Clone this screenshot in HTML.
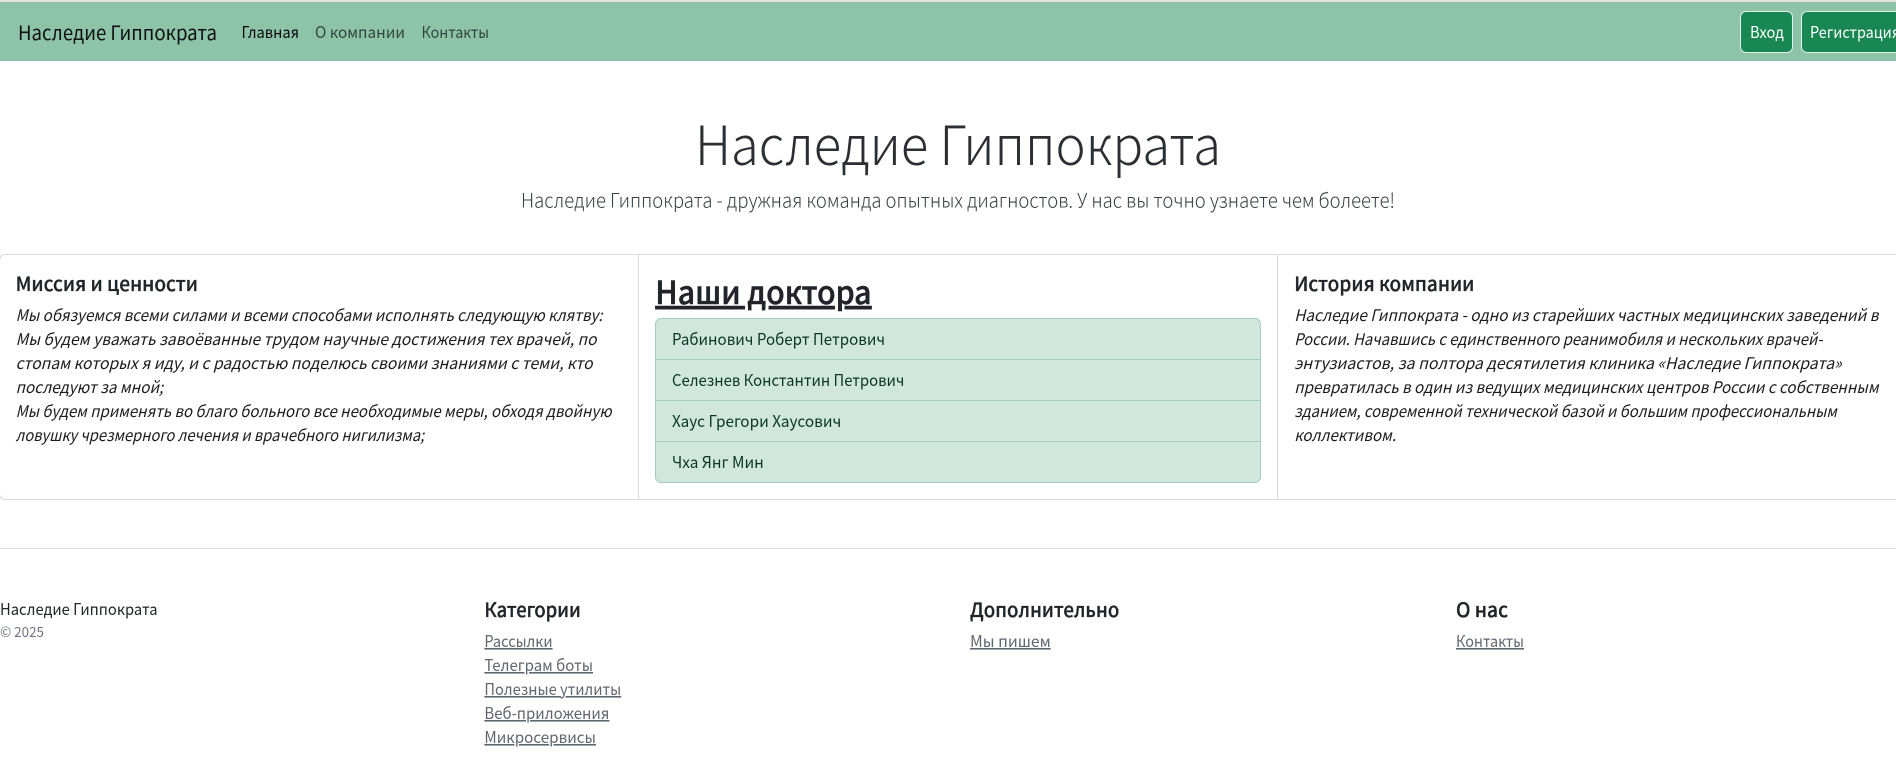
<!DOCTYPE html>
<html lang="ru">
<head>
<meta charset="utf-8">
<title>Наследие Гиппократа</title>
<style>
html,body{margin:0;padding:0;width:1896px;height:767px;overflow:hidden;background:#fff}
.topline{position:absolute;left:0;top:0;width:1896px;height:2px;background:#e2e3e0}
nav{position:absolute;left:0;top:2px;width:1896px;height:59px;background:#8cc3a9}
.btn{position:absolute;top:11px;height:40px;background:#198754;border:1px solid #e4efe9;border-radius:6px;box-sizing:content-box}
.card{position:absolute;left:-1px;top:254px;width:1918px;height:244px;border:1px solid #d9d9d9;border-radius:6px;box-sizing:content-box}
.v{position:absolute;top:255px;width:1px;height:244px;background:#d9d9d9}
.list{position:absolute;left:655px;top:318px;width:604px;height:163px;background:#d1e7dd;border:1px solid #a3cfbb;border-radius:6px}
.sep{position:absolute;left:656px;width:604px;height:1px;background:#a3cfbb}
.hr{position:absolute;left:0;top:548px;width:1896px;height:1px;background:#dfdfe8}
svg{position:absolute;left:0;top:0}
text{font-family:"Noto Sans CJK JP","Liberation Sans",sans-serif;font-size:16px;fill:#212529;white-space:pre}
.i{font-style:italic;fill:#1c1c1c}
.h5{font-size:20px;font-weight:500;stroke:#212529;stroke-width:.3px}
.lnk{fill:#60676e;text-decoration:underline}
.it{fill:#0a3622}
.n{fill:rgba(0,0,0,.65)}
</style>
</head>
<body>
<div class="topline"></div>
<nav></nav>
<div class="btn" style="left:1740px;width:51px"></div>
<div class="btn" style="left:1801px;width:120px"></div>
<div class="card"></div>
<div class="v" style="left:638px"></div>
<div class="v" style="left:1277px"></div>
<div class="list"></div>
<div class="sep" style="top:359px"></div>
<div class="sep" style="top:400px"></div>
<div class="sep" style="top:441px"></div>
<div class="hr"></div>
<svg width="1896" height="767" viewBox="0 0 1896 767" xmlns="http://www.w3.org/2000/svg">
<g>
<text x="18" y="40" style="font-size:20px;fill:#111" textLength="199" lengthAdjust="spacingAndGlyphs">Наследие Гиппократа</text>
<text x="241.5" y="38" style="fill:#0a0a0a" textLength="57.5" lengthAdjust="spacingAndGlyphs">Главная</text>
<text class="n" x="315" y="38" textLength="90" lengthAdjust="spacingAndGlyphs">О компании</text>
<text class="n" x="421.5" y="38" textLength="67.5" lengthAdjust="spacingAndGlyphs">Контакты</text>
<text x="1750" y="38" style="fill:#fff" textLength="34" lengthAdjust="spacingAndGlyphs">Вход</text>
<text x="1810" y="38" style="fill:#fff" textLength="90" lengthAdjust="spacingAndGlyphs">Регистрация</text>

<text x="695" y="165" style="font-size:54px;font-weight:300;fill:#2b2f33" textLength="526" lengthAdjust="spacingAndGlyphs">Наследие Гиппократа</text>
<text x="521" y="207.5" style="font-size:20px;font-weight:300;fill:#3a3f44" textLength="874" lengthAdjust="spacingAndGlyphs">Наследие Гиппократа - дружная команда опытных диагностов. У нас вы точно узнаете чем болеете!</text>

<text class="h5" x="15.6" y="291" textLength="182.4" lengthAdjust="spacingAndGlyphs">Миссия и ценности</text>
<text class="i" x="15.6" y="321" textLength="587" lengthAdjust="spacingAndGlyphs">Мы обязуемся всеми силами и всеми способами исполнять следующую клятву:</text>
<text class="i" x="15.6" y="345" textLength="581" lengthAdjust="spacingAndGlyphs">Мы будем уважать завоёванные трудом научные достижения тех врачей, по</text>
<text class="i" x="15.6" y="369" textLength="577" lengthAdjust="spacingAndGlyphs">стопам которых я иду, и с радостью поделюсь своими знаниями с теми, кто</text>
<text class="i" x="15.6" y="393" textLength="147.7" lengthAdjust="spacingAndGlyphs">последуют за мной;</text>
<text class="i" x="15.6" y="417" textLength="596" lengthAdjust="spacingAndGlyphs">Мы будем применять во благо больного все необходимые меры, обходя двойную</text>
<text class="i" x="15.6" y="441" textLength="408.6" lengthAdjust="spacingAndGlyphs">ловушку чрезмерного лечения и врачебного нигилизма;</text>

<text x="655.3" y="304" style="font-size:32px;font-weight:500;text-decoration:underline;stroke:#212529;stroke-width:.5px" textLength="216.3" lengthAdjust="spacingAndGlyphs">Наши доктора</text>
<text class="it" x="672" y="345" textLength="213" lengthAdjust="spacingAndGlyphs">Рабинович Роберт Петрович</text>
<text class="it" x="672" y="386" textLength="232.4" lengthAdjust="spacingAndGlyphs">Селезнев Константин Петрович</text>
<text class="it" x="672" y="427" textLength="169.3" lengthAdjust="spacingAndGlyphs">Хаус Грегори Хаусович</text>
<text class="it" x="672" y="468" textLength="91.8" lengthAdjust="spacingAndGlyphs">Чха Янг Мин</text>

<text class="h5" x="1294.2" y="291" textLength="180.2" lengthAdjust="spacingAndGlyphs">История компании</text>
<text class="i" x="1294.2" y="321" textLength="584.2" lengthAdjust="spacingAndGlyphs">Наследие Гиппократа - одно из старейших частных медицинских заведений в</text>
<text class="i" x="1294.2" y="345" textLength="528.3" lengthAdjust="spacingAndGlyphs">России. Начавшись с единственного реанимобиля и нескольких врачей-</text>
<text class="i" x="1294.2" y="369" textLength="547.5" lengthAdjust="spacingAndGlyphs">энтузиастов, за полтора десятилетия клиника «Наследие Гиппократа»</text>
<text class="i" x="1294.2" y="393" textLength="584.4" lengthAdjust="spacingAndGlyphs">превратилась в один из ведущих медицинских центров России с собственным</text>
<text class="i" x="1294.2" y="417" textLength="542.7" lengthAdjust="spacingAndGlyphs">зданием, современной технической базой и большим профессиональным</text>
<text class="i" x="1294.2" y="441" textLength="101.9" lengthAdjust="spacingAndGlyphs">коллективом.</text>

<text x="0" y="615" textLength="157.5" lengthAdjust="spacingAndGlyphs">Наследие Гиппократа</text>
<text x="0" y="637" style="font-size:14px;fill:#6c757d" textLength="44" lengthAdjust="spacingAndGlyphs">© 2025</text>

<text class="h5" x="484.4" y="617" textLength="96.4" lengthAdjust="spacingAndGlyphs">Категории</text>
<text class="lnk" x="484.4" y="647" textLength="68.2" lengthAdjust="spacingAndGlyphs">Рассылки</text>
<text class="lnk" x="484.4" y="671" textLength="108.6" lengthAdjust="spacingAndGlyphs">Телеграм боты</text>
<text class="lnk" x="484.4" y="695" textLength="136.8" lengthAdjust="spacingAndGlyphs">Полезные утилиты</text>
<text class="lnk" x="484.4" y="719" textLength="125" lengthAdjust="spacingAndGlyphs">Веб-приложения</text>
<text class="lnk" x="484.4" y="743" textLength="111.6" lengthAdjust="spacingAndGlyphs">Микросервисы</text>

<text class="h5" x="970" y="617" textLength="149.3" lengthAdjust="spacingAndGlyphs">Дополнительно</text>
<text class="lnk" x="970" y="647" textLength="80.7" lengthAdjust="spacingAndGlyphs">Мы пишем</text>
<text class="h5" x="1456" y="617" textLength="52" lengthAdjust="spacingAndGlyphs">О нас</text>
<text class="lnk" x="1456" y="647" textLength="68" lengthAdjust="spacingAndGlyphs">Контакты</text>
</g>
</svg>
</body>
</html>
